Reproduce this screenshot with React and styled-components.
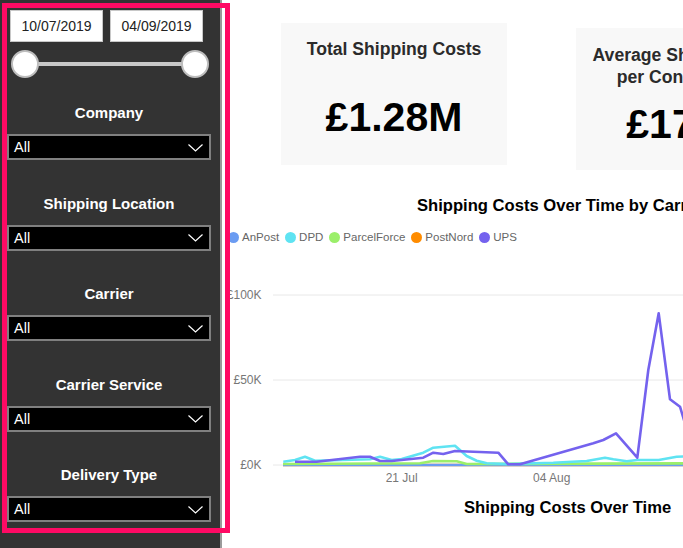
import React from "react";
import styled, { createGlobalStyle } from "styled-components";

const GlobalStyle = createGlobalStyle`
  html, body {
    margin: 0;
    padding: 0;
    width: 683px;
    height: 548px;
    overflow: hidden;
    background: #fff;
    font-family: "Liberation Sans", Arial, sans-serif;
  }
`;

const filters = ["Company", "Shipping Location", "Carrier", "Carrier Service", "Delivery Type"];

const legend = [
  { name: "AnPost", color: "#6b9cf2" },
  { name: "DPD", color: "#5fe3f2" },
  { name: "ParcelForce", color: "#9bef6a" },
  { name: "PostNord", color: "#ff8c00" },
  { name: "UPS", color: "#7462ee" },
];

// points in page coordinates, read off the screenshot
const series = {
  anpost: "283,465 700,465",
  postnord: "283,465 700,465",
  parcel: "283,464 420,463.3 433,461 456.7,461.3 466.7,464 700,463.3",
  dpd:
    "283.3,461.7 295,460 305,456.7 315,460.7 370,459.3 380,456.7 391.7,460 401.7,459 423.3,452.7 433.3,447.7 455,445.7 466.7,456 476.7,460.7 486.7,463.3 506.7,464 553.3,462.7 586.7,461 605,457.7 613.3,459.3 626.7,461.3 637.3,460 658.7,460 676.7,456.7 700,456",
  ups:
    "295,461.7 316.7,461.7 360,456.7 370,456.7 380,461 391.7,461 423.3,457.7 433.3,452.7 443.3,454 455,451 498.3,452.7 508.3,464.3 520,464.3 593.3,443.3 603.3,440 616,433.3 637.3,457.7 648.3,370 658.7,313.3 670,399.3 680,406.7 690,440",
};

const App = () => {
  return (
    <>
      <GlobalStyle />
      <Page>
        <Sidebar>
          <DateRow>
            <DateBox>10/07/2019</DateBox>
            <DateBox>04/09/2019</DateBox>
          </DateRow>
          <Slider>
            <Thumb />
            <Thumb />
          </Slider>
          <FilterList>
            {filters.map((f) => (
              <FilterGroup key={f}>
                <FilterLabel>{f}</FilterLabel>
                <Dropdown>
                  <span>All</span>
                  <svg width="15" height="8" viewBox="0 0 15 8">
                    <polyline points="0.5,0.5 7.5,7 14.5,0.5" fill="none" stroke="#fff" strokeWidth="1.2" />
                  </svg>
                </Dropdown>
              </FilterGroup>
            ))}
          </FilterList>
        </Sidebar>

        <Main>
          <KpiRow>
            <Card $pad={15}>
              <CardTitle>Total Shipping Costs</CardTitle>
              <CardValue $top={34}>£1.28M</CardValue>
            </Card>
            <Card $offset={5} $pad={16}>
              <CardTitle>
                Average Shipping Cost
                <br />
                per Consignment
              </CardTitle>
              <CardValue $top={13}>£17.42</CardValue>
            </Card>
          </KpiRow>

          <Chart>
            <ChartTitle $left={195}>Shipping Costs Over Time by Carrier</ChartTitle>
            <Legend>
              {legend.map((l) => (
                <LegendItem key={l.name}>
                  <Dot $color={l.color} />
                  {l.name}
                </LegendItem>
              ))}
            </Legend>
            <Plot width="470" height="200" viewBox="222 285 470 200">
              <line x1="273" y1="295" x2="692" y2="295" stroke="#e8e8e8" strokeWidth="1" />
              <line x1="273" y1="380" x2="692" y2="380" stroke="#e8e8e8" strokeWidth="1" />
              <line x1="273" y1="465" x2="692" y2="465" stroke="#e8e8e8" strokeWidth="1" />
              <g fontSize="12" fill="#777" fontFamily="Liberation Sans, Arial, sans-serif">
                <text x="261.5" y="299" textAnchor="end">£100K</text>
                <text x="261.5" y="384" textAnchor="end">£50K</text>
                <text x="261.5" y="469" textAnchor="end">£0K</text>
                <text x="401.7" y="482" textAnchor="middle">21 Jul</text>
                <text x="551.7" y="482" textAnchor="middle">04 Aug</text>
              </g>
              <g fill="none" strokeWidth="2.6" strokeLinejoin="round">
                <polyline points={series.postnord} stroke="#ff8c00" />
                <polyline points={series.anpost} stroke="#6b9cf2" />
                <polyline points={series.parcel} stroke="#9bef6a" />
                <polyline points={series.dpd} stroke="#5fe3f2" />
                <polyline points={series.ups} stroke="#7462ee" />
              </g>
            </Plot>
            <ChartTitle $left={242}>Shipping Costs Over Time</ChartTitle>
          </Chart>
        </Main>

        <Highlight />
      </Page>
    </>
  );
};

const Page = styled.div`
  position: relative;
  display: flex;
  width: 683px;
  height: 548px;
  overflow: hidden;
`;

const Sidebar = styled.div`
  flex: 0 0 222px;
  display: flex;
  flex-direction: column;
  padding: 10px 0 0 7px;
  box-sizing: border-box;
  background: #333333;
  border-right: 2px solid #9a9a9a;
`;

const DateRow = styled.div`
  display: flex;
  gap: 7px;
  margin-left: 3px;
`;

const DateBox = styled.div`
  width: 93px;
  height: 32px;
  box-sizing: border-box;
  border: 1px solid #c8c8c8;
  background: #fff;
  color: #222;
  font-size: 14px;
  display: flex;
  align-items: center;
  justify-content: center;
`;

const Slider = styled.div`
  position: relative;
  display: flex;
  justify-content: space-between;
  width: 198px;
  height: 28px;
  margin: 8px 0 0 4px;

  &::before {
    content: "";
    position: absolute;
    left: 14px;
    right: 14px;
    top: 12px;
    height: 4px;
    background: #c8c8c8;
  }
`;

const Thumb = styled.div`
  position: relative;
  width: 28px;
  height: 28px;
  box-sizing: border-box;
  border-radius: 50%;
  background: #fff;
  border: 2px solid #bdbdbd;
`;

const FilterList = styled.div`
  display: flex;
  flex-direction: column;
  gap: 33.5px;
  margin-top: 25px;
`;

const FilterGroup = styled.div`
  display: flex;
  flex-direction: column;
  width: 204px;
`;

const FilterLabel = styled.div`
  height: 20px;
  line-height: 20px;
  margin-bottom: 11px;
  text-align: center;
  color: #fff;
  font-size: 15px;
  font-weight: bold;
`;

const Dropdown = styled.div`
  height: 26px;
  box-sizing: border-box;
  border: 2px solid #808080;
  background: #000;
  color: #fff;
  font-size: 14.5px;
  display: flex;
  align-items: center;
  justify-content: space-between;
  padding: 0 6px 0 5px;

  svg {
    margin-top: 1px;
  }
`;

const Main = styled.div`
  flex: 1;
  min-width: 0;
  display: flex;
  flex-direction: column;
  background: #fff;
`;

const KpiRow = styled.div`
  display: flex;
  align-items: flex-start;
  gap: 69px;
  padding: 23px 0 0 59px;
`;

const Card = styled.div`
  flex: 0 0 226px;
  height: 142px;
  margin-top: ${(p) => p.$offset || 0}px;
  background: #f8f8f8;
  padding-top: ${(p) => p.$pad}px;
  box-sizing: border-box;
  text-align: center;
`;

const CardTitle = styled.div`
  color: #2b2b2b;
  font-size: 17.6px;
  font-weight: bold;
  line-height: 22px;
`;

const CardValue = styled.div`
  margin-top: ${(p) => p.$top}px;
  color: #000;
  font-size: 41px;
  font-weight: bold;
  line-height: 46px;
`;

const Chart = styled.div`
  display: flex;
  flex-direction: column;
  width: 700px;
  margin-top: 26px;
`;

const ChartTitle = styled.div`
  margin-left: ${(p) => p.$left}px;
  color: #000;
  font-size: 16.6px;
  font-weight: bold;
  line-height: 20px;
  white-space: nowrap;
`;

const Legend = styled.div`
  display: flex;
  gap: 6px;
  margin: 13px 0 0 6px;
  height: 16px;
`;

const LegendItem = styled.div`
  display: flex;
  align-items: center;
  gap: 3px;
  color: #666;
  font-size: 11.5px;
`;

const Dot = styled.span`
  width: 11px;
  height: 11px;
  border-radius: 50%;
  background: ${(p) => p.$color};
`;

const Plot = styled.svg`
  display: block;
  margin: 40px 0 12.7px 0;
`;

const Highlight = styled.div`
  position: absolute;
  left: 2px;
  top: 3px;
  width: 228px;
  height: 530px;
  box-sizing: border-box;
  border: 5px solid #ff0a64;
  pointer-events: none;
`;

export default App;
